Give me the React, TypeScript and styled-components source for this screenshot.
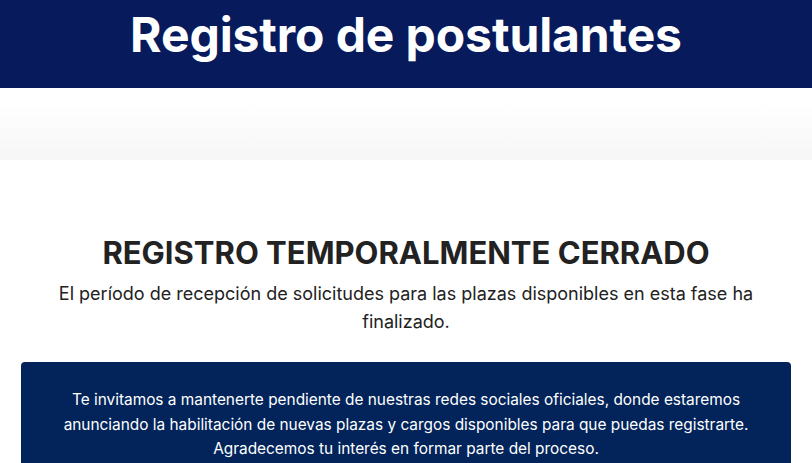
import styled, { createGlobalStyle } from 'styled-components';

const GlobalStyle = createGlobalStyle`
  html, body {
    margin: 0;
    padding: 0;
    background: #ffffff;
    font-family: Inter, "Noto Sans", sans-serif;
  }
`;

const Header = styled.header`
  background-color: #061a5c;
  height: 88px;
  display: flex;
  justify-content: center;
  align-items: flex-start;
`;

const HeaderTitle = styled.h1`
  margin: 0;
  padding-top: 4px;
  color: #ffffff;
  font-size: 48px;
  font-weight: 700;
  line-height: 62px;
  letter-spacing: -0.1px;
`;

const Fade = styled.div`
  height: 72px;
  background: linear-gradient(to bottom, #ffffff 0%, #ffffff 20%, #f6f6f6 100%);
`;

const Content = styled.main`
  padding: 73px 21px 0;
  display: flex;
  flex-direction: column;
  align-items: center;
  text-align: center;
`;

const Heading = styled.h2`
  margin: 0;
  color: #222222;
  font-size: 31px;
  font-weight: 700;
  line-height: 40px;
`;

const Lead = styled.p`
  margin: 7px 0 0;
  max-width: 740px;
  color: #222222;
  font-size: 18px;
  line-height: 28px;
`;

const Notice = styled.div`
  margin-top: 26px;
  align-self: stretch;
  background-color: #02245a;
  border-radius: 4px;
  padding: 26px 30px;
  color: #ffffff;
  font-size: 15.4px;
  line-height: 24.5px;
`;

const App = () => {
  return (
    <>
      <GlobalStyle />
      <Header>
        <HeaderTitle>Registro de postulantes</HeaderTitle>
      </Header>
      <Fade />
      <Content>
        <Heading>REGISTRO TEMPORALMENTE CERRADO</Heading>
        <Lead>
          El período de recepción de solicitudes para las plazas disponibles en esta fase ha
          finalizado.
        </Lead>
        <Notice>
          Te invitamos a mantenerte pendiente de nuestras redes sociales oficiales, donde estaremos
          anunciando la habilitación de nuevas plazas y cargos disponibles para que puedas registrarte.
          Agradecemos tu interés en formar parte del proceso.
        </Notice>
      </Content>
    </>
  );
};

export default App;
